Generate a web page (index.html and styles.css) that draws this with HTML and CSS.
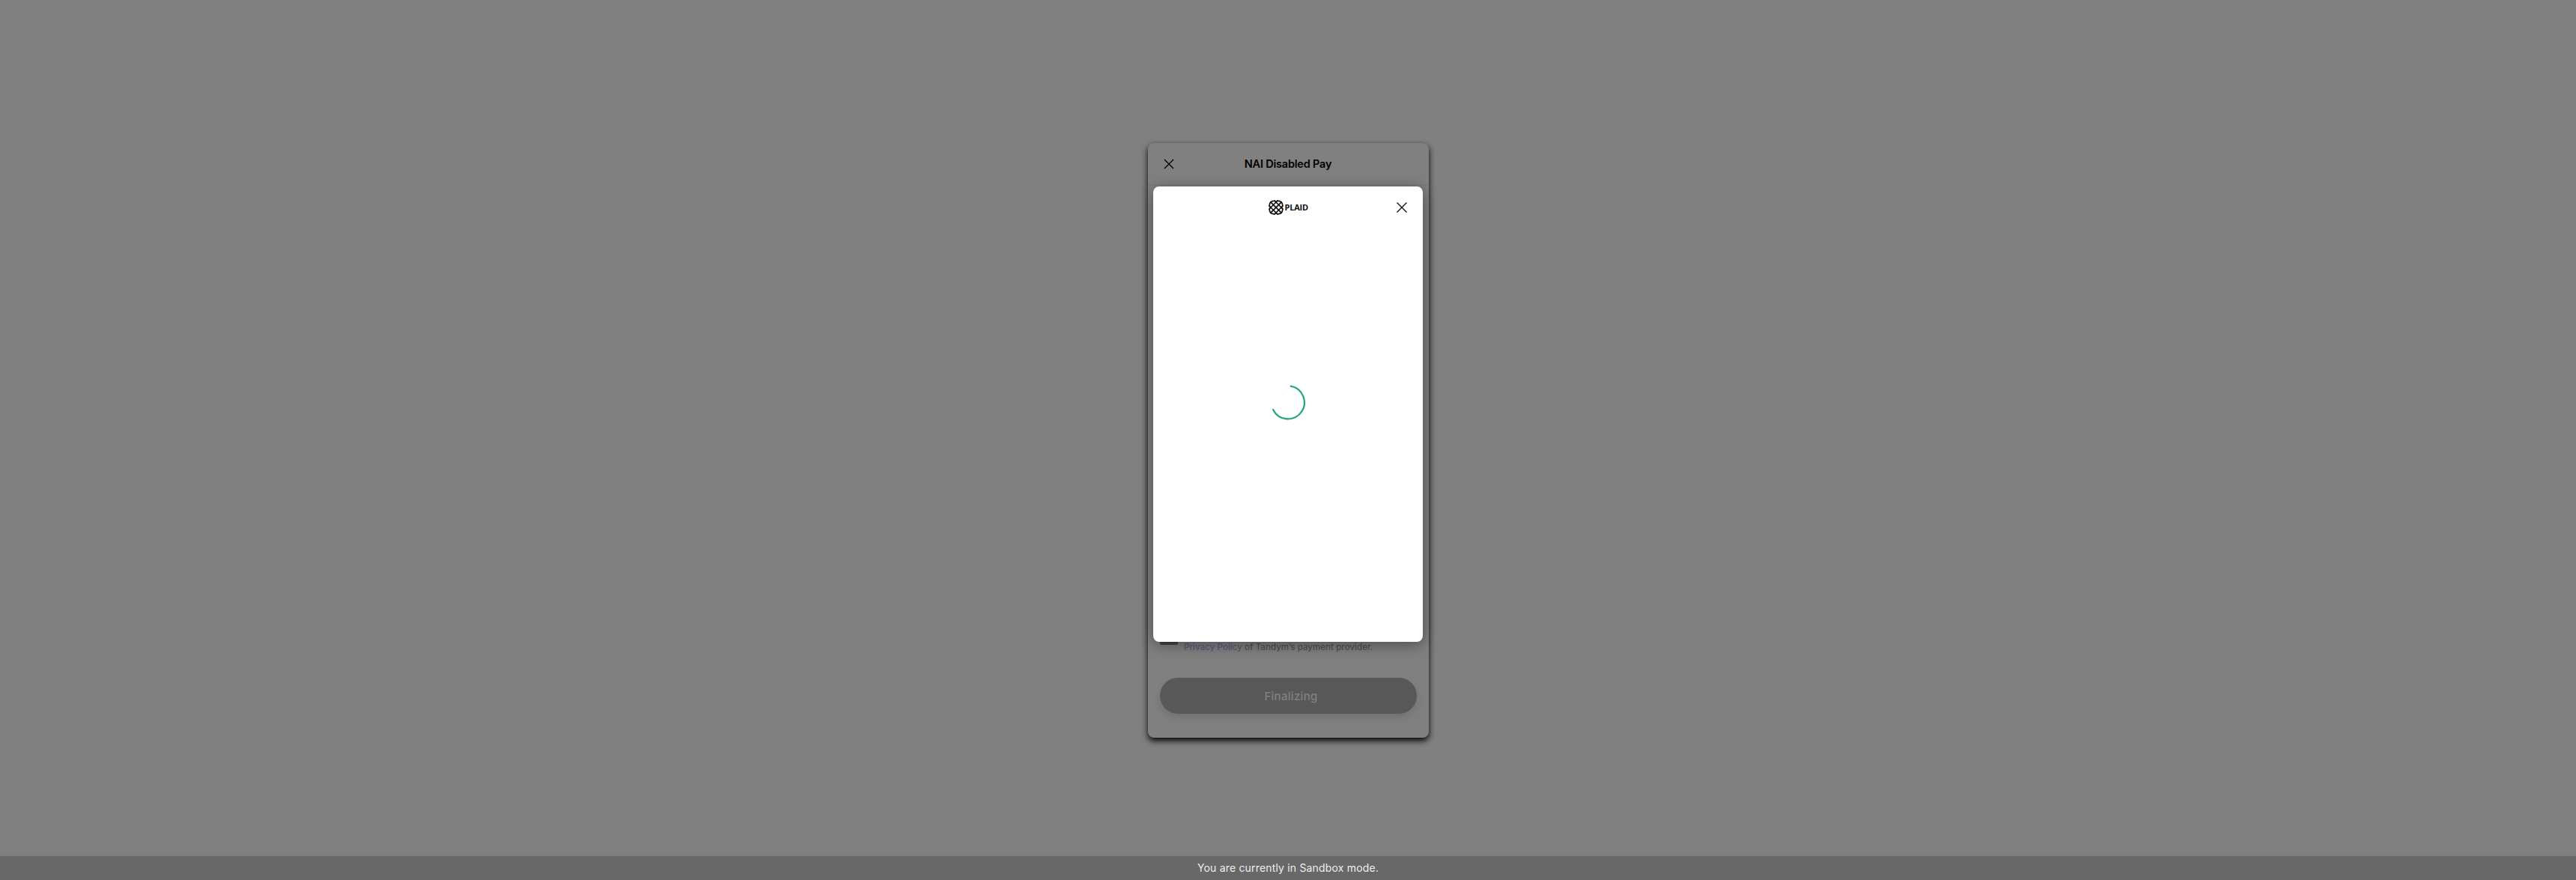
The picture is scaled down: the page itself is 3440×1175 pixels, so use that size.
FILE: index.html
```html
<!DOCTYPE html>
<html lang="en">
<head>
<meta charset="utf-8">
<title>NAI Disabled Pay</title>
<link rel="stylesheet" href="styles.css">
</head>
<body>
<main class="stage">
  <section class="card">
    <header class="card-header">
      <svg class="card-close" viewBox="0 0 14 14"><path d="M1 1l12 12M13 1L1 13"/></svg>
      <h1 class="card-title"><span>NAI Disabled Pay</span></h1>
    </header>
    <div class="card-strip"></div>
    <div class="card-body"></div>
    <div class="consent">
      <span class="checkbox"></span>
      <p class="consent-text"><a class="link">Privacy Policy</a> of Tandym’s payment provider.</p>
    </div>
    <button class="submit" disabled>Finalizing</button>
    <div class="modal">
      <header class="modal-header">
        <div class="plaid">
          <svg class="plaid-mark" viewBox="0 0 20 20">
            <path d="M8 1L4.5 1.8Q2.4 2.4 1.8 4.5L1 8l2 2-2 2 .8 3.5q.6 2.1 2.7 2.7L8 19l2-2 2 2 3.5-.8q2.1-.6 2.7-2.7L19 12l-2-2 2-2-.8-3.5Q17.6 2.4 15.5 1.8L12 1l-2 2z"/>
            <path d="M2.6 2.6l14.8 14.8M17.4 2.6L2.6 17.4M8 1l11 11M1 8l11 11M12 1L1 12M19 8L8 19"/>
          </svg>
          <span class="plaid-word">PLAID</span>
        </div>
        <svg class="modal-close" viewBox="0 0 16 16"><path d="M1.5 1.5l13 13M14.5 1.5l-13 13"/></svg>
      </header>
      <div class="modal-body">
        <svg class="spinner" viewBox="0 0 48 48"><path d="M27.8 2.7A22 22 0 1 1 4.1 34"/></svg>
      </div>
    </div>
  </section>
</main>
<footer class="sandbox">You are currently in Sandbox mode.</footer>
</body>
</html>
```
FILE: styles.css
```css
* { box-sizing: border-box; }
body {
  margin: 0;
  height: 1175px;
  display: flex;
  flex-direction: column;
  overflow: hidden;
  background: #808080;
  font-family: Inter, "Liberation Sans", sans-serif;
}
svg { display: block; fill: none; }
.stage {
  flex: 1;
  display: flex;
  justify-content: center;
  align-items: flex-start;
  padding: 191px 0 0 1px;
}
.card {
  position: relative;
  width: 375px;
  height: 794px;
  display: flex;
  flex-direction: column;
  border-radius: 8px;
  background: #808080;
  box-shadow: 0 4px 9px #000;
}
.card-header {
  height: 57px;
  display: flex;
  align-items: center;
  padding: 0 21px;
  border-bottom: 1px solid #797979;
}
.card-close { width: 14px; height: 14px; stroke: #000; stroke-width: 1.4; }
.card-title {
  flex: 1;
  margin: 0 15px 0 0;
  font-size: 14.5px;
  font-weight: 600;
  line-height: 20px;
  letter-spacing: -.2px;
  text-align: center;
  white-space: nowrap;
}
.card-strip { height: 25px; border-bottom: 1px solid #797979; }
.card-body { height: 564px; }
.consent { height: 68px; display: flex; padding-left: 16px; }
.checkbox { width: 24px; height: 24px; border-radius: 2px; background: #454545; }
.consent-text {
  margin: 19px 0 0 8px;
  font-size: 11.5px;
  font-weight: 500;
  line-height: 16px;
  letter-spacing: .06px;
  color: #505050;
  white-space: nowrap;
}
.link { color: #5c5978; }
.submit {
  width: 343px;
  height: 48px;
  margin: 0 16px;
  padding: 2px 0 0 7px;
  border: 0;
  border-radius: 24px;
  background: #585858;
  color: #808080;
  font: 500 15px/20px Inter, sans-serif;
  letter-spacing: .3px;
  box-shadow: 0 5px 12px rgba(0, 0, 0, .12);
}
.modal {
  position: absolute;
  left: 7px;
  top: 58px;
  width: 360px;
  height: 608px;
  display: flex;
  flex-direction: column;
  border-radius: 8px;
  background: #fff;
  box-shadow: 0 4px 20px rgba(0, 0, 0, .4);
}
.modal-header {
  height: 56px;
  display: grid;
  grid-template-columns: 1fr auto 1fr;
  align-items: center;
  padding: 0 20px;
}
.plaid { grid-column: 2; display: flex; align-items: center; gap: 2px; }
.plaid-mark { width: 20px; height: 20px; stroke: #111; stroke-width: 1.7; }
.plaid-word {
  width: 31px;
  font: 700 11px/14px "Open Sans", sans-serif;
  letter-spacing: -.2px;
  color: #111;
}
.modal-close { justify-self: end; width: 16px; height: 16px; stroke: #111; stroke-width: 1.4; }
.modal-body { flex: 1; display: flex; justify-content: center; padding-top: 208px; }
.spinner { width: 48px; height: 48px; stroke: #22a884; stroke-width: 2.3; stroke-linecap: round; }
.sandbox {
  height: 32px;
  background: #686868;
  color: #eee;
  font-size: 14px;
  line-height: 32px;
  letter-spacing: .18px;
  text-align: center;
}
```
